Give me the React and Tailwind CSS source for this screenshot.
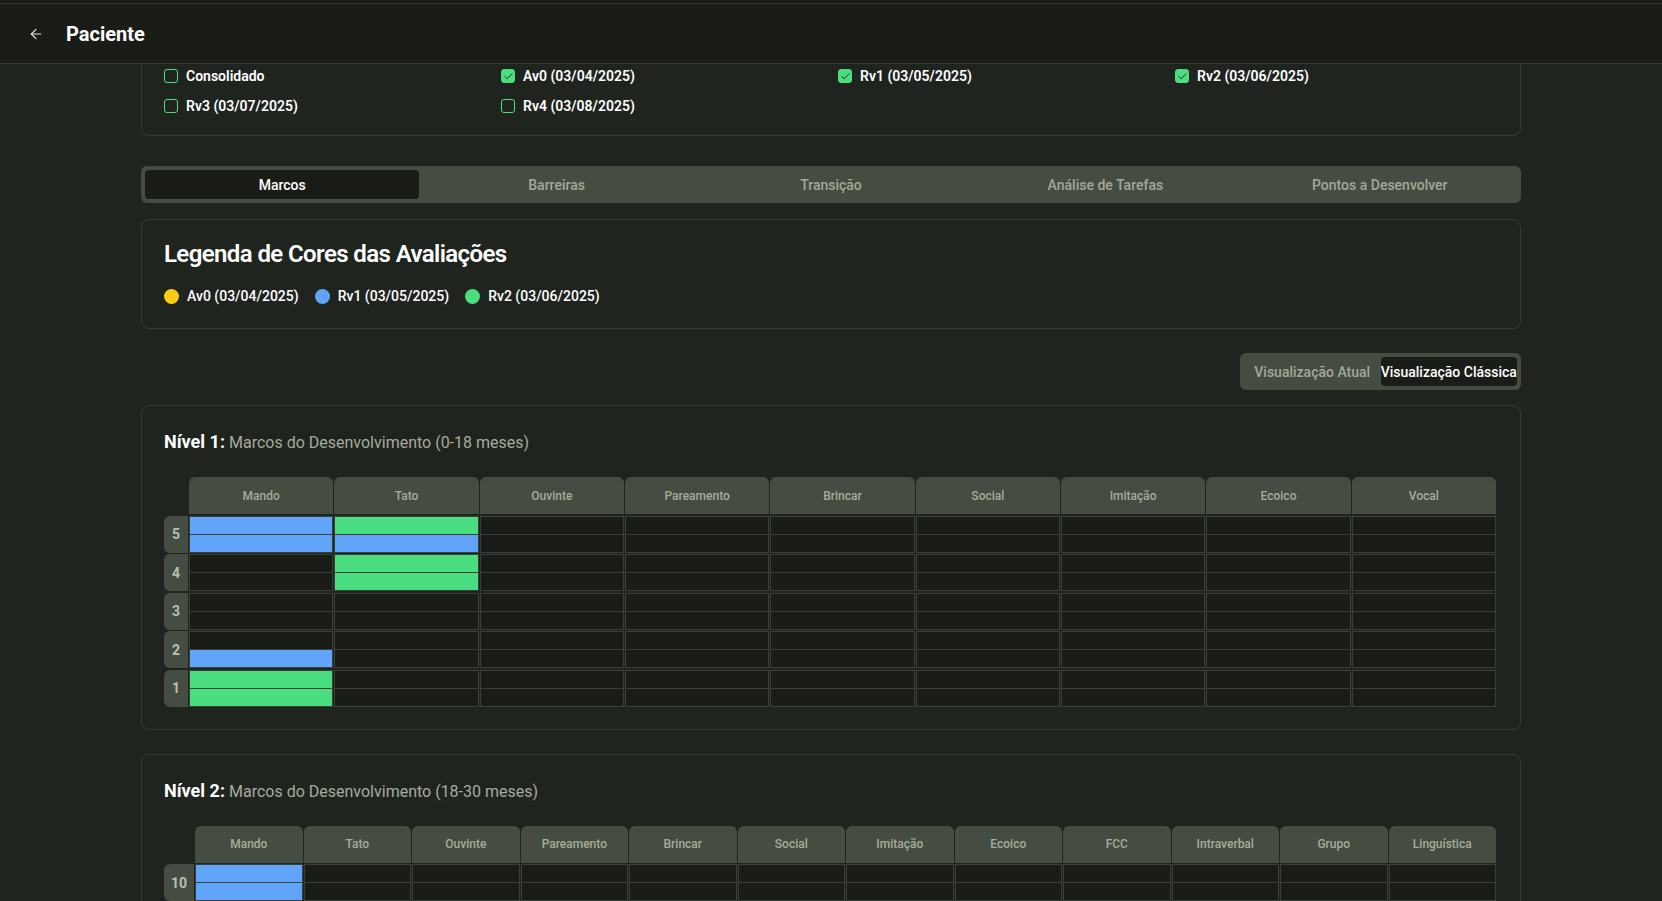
import { ArrowLeft, Check } from 'lucide-react'

const evaluations = [
  { label: 'Consolidado', checked: false },
  { label: 'Av0 (03/04/2025)', checked: true },
  { label: 'Rv1 (03/05/2025)', checked: true },
  { label: 'Rv2 (03/06/2025)', checked: true },
  { label: 'Rv3 (03/07/2025)', checked: false },
  { label: 'Rv4 (03/08/2025)', checked: false },
]

const tabs = ['Marcos', 'Barreiras', 'Transição', 'Análise de Tarefas', 'Pontos a Desenvolver']

const legend = [
  { label: 'Av0 (03/04/2025)', color: 'bg-[#facc15]' },
  { label: 'Rv1 (03/05/2025)', color: 'bg-[#60a5fa]' },
  { label: 'Rv2 (03/06/2025)', color: 'bg-[#4ade80]' },
]

const fills = {
  blue: 'bg-[#60a5fa]',
  green: 'bg-[#4ade80]',
}

const level1 = {
  title: 'Nível 1:',
  subtitle: 'Marcos do Desenvolvimento (0-18 meses)',
  columns: ['Mando', 'Tato', 'Ouvinte', 'Pareamento', 'Brincar', 'Social', 'Imitação', 'Ecoico', 'Vocal'],
  levels: [5, 4, 3, 2, 1],
  data: {
    Mando: { 5: ['blue', 'blue'], 2: [null, 'blue'], 1: ['green', 'green'] },
    Tato: { 5: ['green', 'blue'], 4: ['green', 'green'] },
  },
}

const level2 = {
  title: 'Nível 2:',
  subtitle: 'Marcos do Desenvolvimento (18-30 meses)',
  columns: ['Mando', 'Tato', 'Ouvinte', 'Pareamento', 'Brincar', 'Social', 'Imitação', 'Ecoico', 'FCC', 'Intraverbal', 'Grupo', 'Linguística'],
  levels: [10, 9, 8, 7, 6],
  data: {
    Mando: { 10: ['blue', 'blue'] },
  },
}

const Checkbox = ({ checked }) => (
  <span
    className={
      checked
        ? 'w-[14px] h-[14px] shrink-0 rounded-[3px] bg-[#4ade80] border border-[#4ade80] flex items-center justify-center'
        : 'w-[14px] h-[14px] shrink-0 rounded-[3px] border border-[#4ade80] flex items-center justify-center'
    }
  >
    {checked && <Check size={11} strokeWidth={2} className="text-[#1a1c18]" />}
  </span>
)

const MilestoneGrid = ({ level }) => {
  const cols =
    level.columns.length === 9
      ? 'grid grid-cols-[auto_repeat(9,minmax(0,1fr))] gap-x-px gap-y-[1.5px]'
      : 'grid grid-cols-[auto_repeat(12,minmax(0,1fr))] gap-x-px gap-y-[1.5px]'

  return (
    <div className="rounded-lg border border-[#353a33] pl-[22px] pr-6 pt-[22px] pb-[22px]">
      <h3 className="leading-6">
        <span className="text-lg font-bold text-white">{level.title}</span>
        <span className="ml-1 text-base text-[#a6ab9c]">{level.subtitle}</span>
      </h3>

      <div className={`mt-[21px] ${cols}`}>
        {/* header */}
        <div />
        {level.columns.map((col) => (
          <div
            key={col}
            className="h-[37px] rounded-t-md bg-[#454d42] flex items-center justify-center text-xs font-medium text-[#a6ab9c]"
          >
            {col}
          </div>
        ))}

        {/* rows */}
        {level.levels.map((lv) => (
          <div key={lv} className="contents">
            <div className="h-[37px] min-w-6 rounded-l-md bg-[#454d42] px-[7px] flex items-center justify-center text-sm font-bold text-[#b9bdb0]">
              {lv}
            </div>
            {level.columns.map((col) => {
              const cell = level.data[col]?.[lv] || [null, null]
              return (
                <div key={col} className="h-[37px] border border-[#3a3f37] bg-[#1a1c18] flex flex-col">
                  <div className={`flex-1 ${cell[0] ? fills[cell[0]] : ''}`} />
                  <div className={`flex-1 border-t border-[#3a3f37] ${cell[1] ? fills[cell[1]] : ''}`} />
                </div>
              )
            })}
          </div>
        ))}
      </div>
    </div>
  )
}

export default function App() {
  return (
    <div className="h-screen overflow-hidden bg-[#20241f] font-['Roboto',sans-serif] text-white">
      {/* Top bar */}
      <header className="bg-[#1a1c18] pt-[3px] border-b border-[#363a34]">
        <div className="h-[60px] border-t border-[#363a34] flex items-center pl-7">
          <ArrowLeft size={16} strokeWidth={1.75} className="text-[#e5e5e5]" />
          <h1 className="ml-[22px] text-xl font-bold text-white">Paciente</h1>
        </div>
      </header>

      <main className="w-[1380px] mx-auto">
        {/* Avaliações */}
        <div className="border-x border-b border-[#353a33] rounded-b-lg pl-[22px] pr-6 pt-[2px] pb-[19px]">
          <div className="grid grid-cols-4 gap-x-4 gap-y-[10px]">
            {evaluations.map((ev) => (
              <label key={ev.label} className="h-5 flex items-center gap-2 text-sm font-semibold text-white">
                <Checkbox checked={ev.checked} />
                {ev.label}
              </label>
            ))}
          </div>
        </div>

        {/* Tabs */}
        <div className="mt-[30px] h-[37px] rounded-md bg-[#454d42] p-1 grid grid-cols-5">
          {tabs.map((tab, i) => (
            <button
              key={tab}
              className={
                i === 0
                  ? 'rounded-sm bg-[#1a1c18] text-sm font-medium text-white'
                  : 'rounded-sm text-sm font-medium text-[#a3a897]'
              }
            >
              {tab}
            </button>
          ))}
        </div>

        {/* Legenda */}
        <div className="mt-4 rounded-lg border border-[#353a33] pl-[22px] pr-6 pt-[22px] pb-6">
          <h2 className="text-2xl font-semibold leading-none tracking-tight text-white">
            Legenda de Cores das Avaliações
          </h2>
          <div className="mt-[22px] h-4 flex items-center gap-4">
            {legend.map((item) => (
              <div key={item.label} className="flex items-center gap-2">
                <span className={`w-[15px] h-[15px] rounded-full shrink-0 ${item.color}`} />
                <span className="text-sm font-medium text-white">{item.label}</span>
              </div>
            ))}
          </div>
        </div>

        {/* View toggle */}
        <div className="mt-6 flex justify-end">
          <div className="w-[281px] h-[37px] rounded-md bg-[#454d42] p-1 grid grid-cols-2">
            <button className="rounded-sm text-sm font-medium text-[#a3a897] whitespace-nowrap">
              Visualização Atual
            </button>
            <button className="rounded-sm bg-[#1a1c18] text-sm font-medium text-white whitespace-nowrap">
              Visualização Clássica
            </button>
          </div>
        </div>

        <div className="mt-[15px]">
          <MilestoneGrid level={level1} />
        </div>
        <div className="mt-6">
          <MilestoneGrid level={level2} />
        </div>
      </main>
    </div>
  )
}
